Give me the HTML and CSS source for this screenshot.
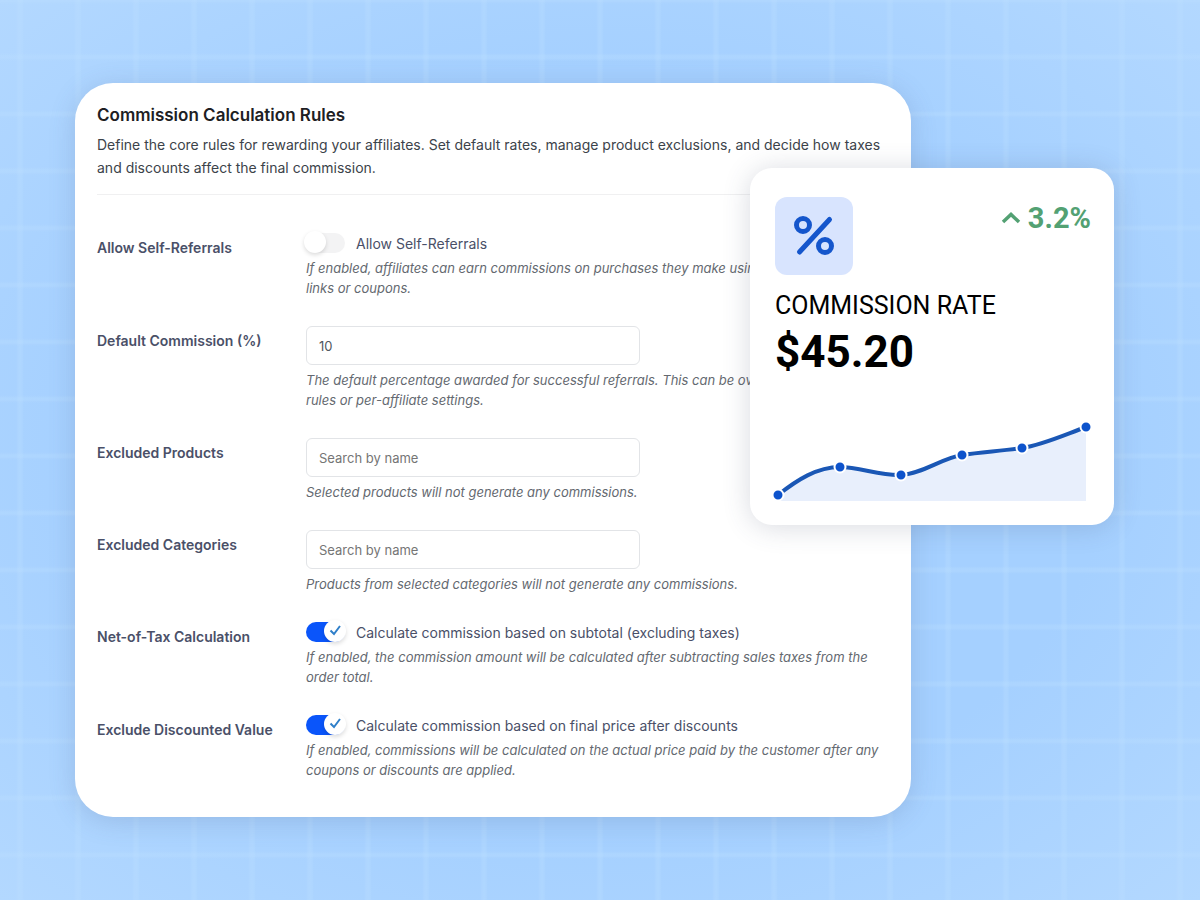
FILE: index.html
```
<!DOCTYPE html>
<html lang="en">
<head>
  <meta charset="UTF-8">
  <meta name="viewport" content="width=device-width, initial-scale=1">
  <title>Commission Calculation Rules</title>
  <link rel="stylesheet" href="styles.css">
</head>
<body>
  <main class="stage">
    <form class="panel">
      <header class="panel-header">
        <h1>Commission Calculation Rules</h1>
        <p>Define the core rules for rewarding your affiliates. Set default rates, manage product exclusions, and decide how taxes and discounts affect the final commission.</p>
      </header>

      <div class="rows">
        <div class="row">
          <label class="row-label" for="self-referrals">Allow Self-Referrals</label>
          <div class="row-body">
            <label class="toggle">
              <span class="switch">
                <input type="checkbox" id="self-referrals">
                <span class="knob"></span>
              </span>
              Allow Self-Referrals
            </label>
            <p class="hint">If enabled, affiliates can earn commissions on purchases they make using their own referral links or coupons.</p>
          </div>
        </div>

        <div class="row">
          <label class="row-label" for="rate">Default Commission (%)</label>
          <div class="row-body">
            <input class="field" id="rate" type="text" value="10">
            <p class="hint">The default percentage awarded for successful referrals. This can be overridden by category rules or per-affiliate settings.</p>
          </div>
        </div>

        <div class="row">
          <label class="row-label" for="products">Excluded Products</label>
          <div class="row-body">
            <input class="field" id="products" type="text" placeholder="Search by name">
            <p class="hint">Selected products will not generate any commissions.</p>
          </div>
        </div>

        <div class="row">
          <label class="row-label" for="categories">Excluded Categories</label>
          <div class="row-body">
            <input class="field" id="categories" type="text" placeholder="Search by name">
            <p class="hint">Products from selected categories will not generate any commissions.</p>
          </div>
        </div>

        <div class="row">
          <label class="row-label" for="net-of-tax">Net-of-Tax Calculation</label>
          <div class="row-body">
            <label class="toggle">
              <span class="switch">
                <input type="checkbox" id="net-of-tax" checked>
                <span class="knob">
                  <svg viewBox="0 0 22 22"><path d="M6.5 10.5l3.500 3.500 6-8"/></svg>
                </span>
              </span>
              Calculate commission based on subtotal (excluding taxes)
            </label>
            <p class="hint">If enabled, the commission amount will be calculated after subtracting sales taxes from the order total.</p>
          </div>
        </div>

        <div class="row">
          <label class="row-label" for="discounted">Exclude Discounted Value</label>
          <div class="row-body">
            <label class="toggle">
              <span class="switch">
                <input type="checkbox" id="discounted" checked>
                <span class="knob">
                  <svg viewBox="0 0 22 22"><path d="M6.5 10.5l3.500 3.500 6-8"/></svg>
                </span>
              </span>
              Calculate commission based on final price after discounts
            </label>
            <p class="hint">If enabled, commissions will be calculated on the actual price paid by the customer after any coupons or discounts are applied.</p>
          </div>
        </div>
      </div>
    </form>

    <!-- Floating stat card, overlaps the panel -->
    <aside class="stat">
      <div class="stat-top">
        <div class="stat-icon">
          <svg viewBox="0 0 78 78">
            <circle cx="28" cy="28" r="6.5"/>
            <circle cx="50" cy="49" r="6.5"/>
            <path d="M54.5 22.5L24.5 55"/>
          </svg>
        </div>
        <div class="trend">
          <svg viewBox="0 0 20 14"><path d="M2 11l8-7.500 8 7.500"/></svg>
          <span>3.2%</span>
        </div>
      </div>
      <div class="stat-label">COMMISSION RATE</div>
      <div class="stat-value">$45.20</div>
      <svg class="chart" viewBox="0 0 320 86">
        <path class="area" d="M6 75C25 60 45 47 68 47C88 47 108 56 129 55C150 54 170 38 190 35C210 32 230 31 250 28C270 25 292 15 314 7V81H6Z"/>
        <path class="line" d="M6 75C25 60 45 47 68 47C88 47 108 56 129 55C150 54 170 38 190 35C210 32 230 31 250 28C270 25 292 15 314 7"/>
        <circle cx="6" cy="75" r="5.5"/>
        <circle cx="68" cy="47" r="5.5"/>
        <circle cx="129" cy="55" r="5.5"/>
        <circle cx="190" cy="35" r="5.5"/>
        <circle cx="250" cy="28" r="5.5"/>
        <circle cx="314" cy="7" r="5.5"/>
      </svg>
    </aside>
  </main>
</body>
</html>
```
FILE: styles.css
```
* {
  box-sizing: border-box;
}

body {
  margin: 0;
  min-height: 100vh;
  font-family: Inter, "Liberation Sans", sans-serif;
  font-size: 14px;
  color: #3c434a;
  /* pale grid over a soft blue glow */
  background-color: #a5d0ff;
  background-image:
    linear-gradient(90deg, transparent 25px, rgba(190, 224, 255, 0.28) 28px, rgba(190, 224, 255, 0.28) 30px, transparent 33px),
    linear-gradient(transparent 25px, rgba(190, 224, 255, 0.28) 28px, rgba(190, 224, 255, 0.28) 30px, transparent 33px),
    radial-gradient(ellipse at center, #a5d0ff 60%, #b3d8ff 100%);
  background-size: 58px 100%, 100% 57px, 100% 100%;
  background-position: 50% 0, 0 28px, 0 0;
}

h1,
p {
  margin: 0;
}

.stage {
  position: relative;
  margin: 0 86px 0 75px;
  padding: 83px 0;
}

/* Settings panel */
.panel {
  margin-right: 203px;
  padding: 20px 22px 37px;
  background: #fff;
  border-radius: 38px;
  box-shadow: 0 4px 26px rgba(80, 100, 140, 0.22);
}

.panel-header {
  padding-bottom: 15px;
  border-bottom: 1px solid #f0f0f1;
}

.panel-header h1 {
  margin-bottom: 6px;
  font-size: 17px;
  line-height: 24px;
  font-weight: 600;
  color: #1d2023;
}

.panel-header p {
  font-size: 14px;
  line-height: 23px;
}

.rows {
  display: flex;
  flex-direction: column;
  gap: 28px;
  margin-top: 38px;
}

.row {
  display: grid;
  grid-template-columns: 209px 1fr;
}

.row-label {
  padding-top: 4px;
  line-height: 22px;
  font-weight: 600;
  color: #4a5068;
}

.field {
  display: block;
  width: 334px;
  max-width: 100%;
  height: 39px;
  margin-bottom: 5px;
  padding: 0 12px;
  font: inherit;
  font-size: 13px;
  color: #50575e;
  background: #fff;
  border: 1px solid #e2e4e7;
  border-radius: 6px;
}

.field::placeholder {
  color: #757575;
  opacity: 1;
}

.hint {
  font-size: 13px;
  line-height: 20px;
  font-style: italic;
  color: #646970;
}

/* Toggles */
.toggle {
  display: flex;
  align-items: center;
  gap: 11px;
  height: 20px;
  margin-bottom: 5px;
  color: #4a5068;
}

.switch {
  position: relative;
  width: 39px;
  height: 20px;
}

.switch input {
  appearance: none;
  display: block;
  width: 100%;
  height: 100%;
  margin: 0;
  border-radius: 10px;
  background: #f3f3f4;
}

.switch input:checked {
  background: #0a55fa;
}

.knob {
  position: absolute;
  top: -2px;
  left: -2px;
  width: 22px;
  height: 22px;
  border-radius: 50%;
  background: #fff;
  box-shadow: 0 2px 4px rgba(0, 0, 0, 0.14);
  pointer-events: none;
}

.switch input:checked + .knob {
  left: 18px;
}

.knob svg {
  display: block;
  fill: none;
  stroke: #2f7fc9;
  stroke-width: 2;
}

/* Stat card */
.stat {
  position: absolute;
  top: 168px;
  right: 0;
  width: 364px;
  padding: 29px 23px 19px 25px;
  font-family: Roboto, "Liberation Sans", sans-serif;
  color: #000;
  background: #fff;
  border-radius: 22px;
  box-shadow: 0 2px 28px rgba(60, 70, 100, 0.2);
}

.stat-top {
  display: flex;
  justify-content: space-between;
  align-items: flex-start;
}

.stat-icon {
  width: 78px;
  height: 78px;
  border-radius: 12px;
  background: #d8e4fe;
}

.stat-icon svg {
  display: block;
  fill: none;
  stroke: #1556cc;
  stroke-width: 5;
  stroke-linecap: round;
}

.trend {
  display: flex;
  align-items: center;
  gap: 7px;
  padding-top: 3px;
  font-size: 29px;
  line-height: 36px;
  font-weight: 700;
  color: #53a173;
}

.trend svg {
  width: 20px;
  fill: none;
  stroke: currentColor;
  stroke-width: 3.5;
}

.stat-label {
  margin-top: 14px;
  font-size: 25px;
  line-height: 34px;
}

.stat-value {
  margin-top: 2px;
  font-size: 44px;
  line-height: 54px;
  font-weight: 700;
}

.chart {
  display: block;
  width: 320px;
  margin: 41px 0 0 -3px;
}

.chart .area {
  fill: #e8effc;
}

.chart .line {
  fill: none;
  stroke: #1a57b5;
  stroke-width: 4;
}

.chart circle {
  fill: #0d53cc;
  stroke: #fff;
  stroke-width: 2;
}
```
